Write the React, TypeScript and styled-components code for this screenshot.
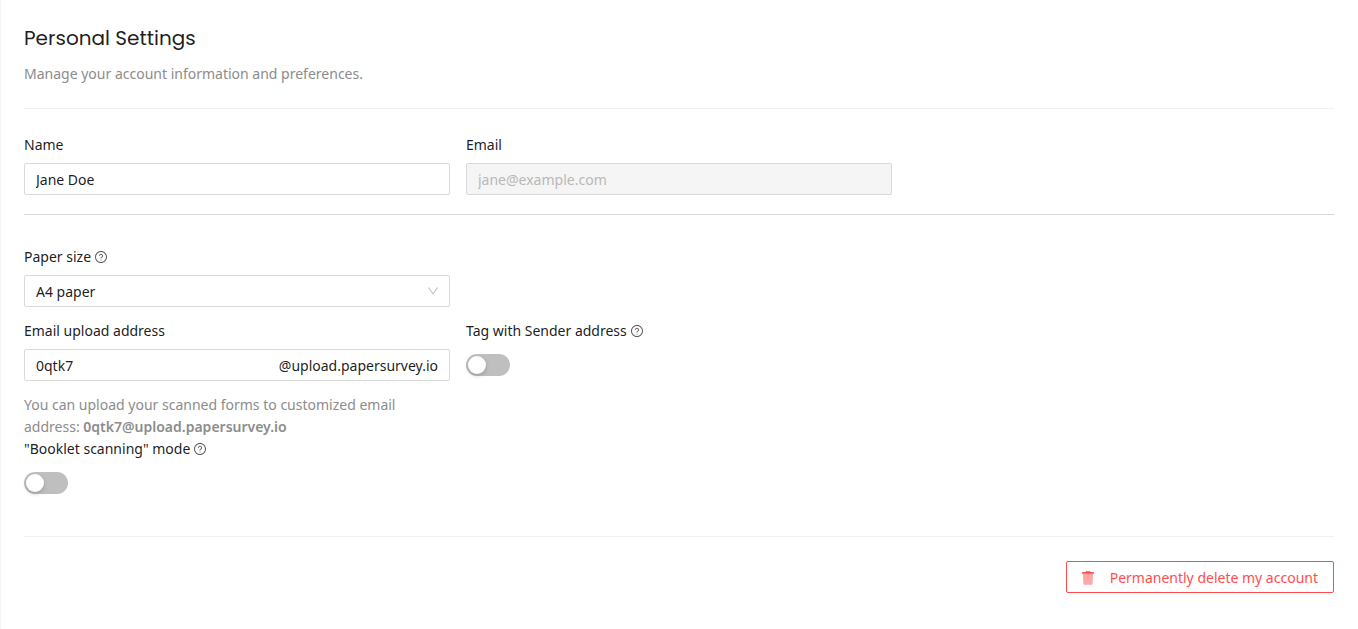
import React, { useState } from "react";
import styled, { createGlobalStyle, css } from "styled-components";

const GlobalStyle = createGlobalStyle`
  *, *::before, *::after { box-sizing: border-box; }
  body {
    margin: 0;
    background: #fff;
    color: rgba(0, 0, 0, 0.9);
    font-family: "Noto Sans", sans-serif;
    font-size: 14px;
    line-height: 22px;
  }
`;

const Page = styled.main`
  min-height: 100vh;
  padding: 24px 24px 24px 23px;
  border-left: 1px solid #f5f5f5;
`;

const Header = styled.header`
  padding-bottom: 23px;
  border-bottom: 1px solid #f0f0f0;
`;

const Title = styled.h1`
  margin: 0 0 11px;
  font-family: Poppins, Inter, sans-serif;
  font-size: 20px;
  font-weight: 400;
  line-height: 28px;
`;

const Muted = styled.p`
  margin: 0;
  color: #8c8c8c;
`;

const Section = styled.section<{ $bottom: number }>`
  display: grid;
  gap: 13px;
  padding-bottom: ${(p) => p.$bottom}px;
`;

const ProfileSection = styled(Section)`
  padding-top: 25px;
  border-bottom: 1px solid #d9d9d9;
`;

const UploadSection = styled(Section)`
  padding-top: 31px;
  border-bottom: 1px solid #f0f0f0;
`;

const Row = styled.div`
  display: grid;
  grid-template-columns: repeat(3, minmax(0, 1fr));
  column-gap: 16px;
`;

const Stack = styled.div``;

const LabelLine = styled.div`
  display: flex;
  align-items: center;
  gap: 4px;
  margin-bottom: 7px;
`;

const controlBox = css`
  width: 100%;
  height: 32px;
  border: 1px solid #d9d9d9;
  border-radius: 2px;
  background: #fff;
  color: inherit;
  font: inherit;
`;

const TextInput = styled.input`
  ${controlBox}
  padding: 0 11px;
  &:disabled {
    background: #f5f5f5;
    color: #b8b8b8;
  }
`;

const SelectWrap = styled.div`
  display: grid;
  align-items: center;
  > * { grid-area: 1 / 1; }
  > svg {
    justify-self: end;
    margin-right: 11px;
    color: #bfbfbf;
    pointer-events: none;
  }
`;

const Select = styled.select`
  ${controlBox}
  appearance: none;
  padding: 2px 32px 0 11px;
`;

const SuffixBox = styled.div`
  ${controlBox}
  display: flex;
  align-items: center;
  padding: 2px 11px 0;
`;

const BareInput = styled.input`
  flex: 1;
  min-width: 0;
  padding: 0;
  border: 0;
  outline: 0;
  background: none;
  color: inherit;
  font: inherit;
`;

const Help = styled(Muted)`
  margin-top: 13px;
  strong { font-weight: 600; }
`;

const SwitchLine = styled.div`
  display: flex;
  align-items: center;
  height: 32px;
`;

const Switch = styled.input`
  appearance: none;
  width: 44px;
  height: 22px;
  margin: 0;
  padding: 2px;
  border-radius: 11px;
  background: #bfbfbf;
  cursor: pointer;
  &::before {
    content: "";
    display: block;
    width: 18px;
    height: 18px;
    border-radius: 50%;
    background: #fff;
    box-shadow: 0 2px 4px rgba(0, 35, 11, 0.2);
  }
  &:checked { background: #1890ff; }
  &:checked::before { margin-left: auto; }
`;

const Footer = styled.footer`
  display: flex;
  justify-content: flex-end;
  padding-top: 24px;
`;

const DangerButton = styled.button`
  display: flex;
  align-items: center;
  gap: 16px;
  height: 32px;
  padding: 1px 15px 0;
  border: 1px solid #ff4d4f;
  border-radius: 2px;
  background: #fff;
  color: #ff4d4f;
  font: inherit;
  cursor: pointer;
`;

const HelpIcon = () => (
  <svg width="12" height="12" viewBox="64 64 896 896" fill="#595959" aria-hidden="true">
    <path d="M512 64C264.600 64 64 264.600 64 512s200.600 448 448 448 448-200.600 448-448S759.400 64 512 64zm0 820c-205.400 0-372-166.600-372-372s166.600-372 372-372 372 166.600 372 372-166.600 372-372 372z" />
    <path d="M623.600 316.700C593.600 290.400 554 276 512 276s-81.600 14.500-111.600 40.700C369.200 344 352 380.700 352 420v7.600c0 4.400 3.600 8 8 8h48c4.400 0 8-3.600 8-8V420c0-44.100 43.100-80 96-80s96 35.900 96 80c0 31.100-22 59.600-56.100 72.700-21.200 8.100-39.200 22.300-52.100 40.900-13.100 19-19.900 41.800-19.900 64.900V620c0 4.400 3.600 8 8 8h48c4.400 0 8-3.600 8-8v-22.700a48.300 48.300 0 0 1 30.900-44.800c59-22.700 97.100-74.700 97.100-132.500.1-39.300-17.100-76-48.300-103.300zM472 732a40 40 0 1 0 80 0 40 40 0 1 0-80 0z" />
  </svg>
);

const ChevronIcon = () => (
  <svg width="12" height="12" viewBox="64 64 896 896" fill="currentColor" aria-hidden="true">
    <path d="M884 256h-75c-5.100 0-9.900 2.500-12.900 6.600L512 654.200 227.900 262.600c-3-4.100-7.800-6.600-12.900-6.600h-75c-6.500 0-10.300 7.400-6.500 12.700l352.600 486.100c12.800 17.600 39 17.600 51.700 0l352.600-486.100c3.900-5.300.1-12.700-6.400-12.700z" />
  </svg>
);

const TrashIcon = () => (
  <svg width="12" height="14" viewBox="0 0 448 512" fill="currentColor" aria-hidden="true">
    <path opacity="0.5" d="M53.200 467a48 48 0 0 0 47.900 45h245.800a48 48 0 0 0 47.900-45L416 96H32z" />
    <path d="M432 32H312l-9.400-18.700A24 24 0 0 0 281.100 0H166.800a23.700 23.700 0 0 0-21.400 13.300L136 32H16A16 16 0 0 0 0 48v32a16 16 0 0 0 16 16h416a16 16 0 0 0 16-16V48a16 16 0 0 0-16-16z" />
  </svg>
);

type FieldProps = { id: string; label: string; hint?: boolean; children: React.ReactNode };

const Field = ({ id, label, hint, children }: FieldProps) => (
  <Stack>
    <LabelLine>
      <label htmlFor={id}>{label}</label>
      {hint && <HelpIcon />}
    </LabelLine>
    {children}
  </Stack>
);

export default function App() {
  const [name, setName] = useState("Jane Doe");
  const [address, setAddress] = useState("0qtk7");

  return (
    <>
      <GlobalStyle />
      <Page>
        <Header>
          <Title>Personal Settings</Title>
          <Muted>Manage your account information and preferences.</Muted>
        </Header>
        <ProfileSection $bottom={19}>
          <Row>
            <Field id="name" label="Name">
              <TextInput id="name" value={name} onChange={(e) => setName(e.target.value)} />
            </Field>
            <Field id="email" label="Email">
              <TextInput id="email" type="email" value="jane@example.com" disabled />
            </Field>
          </Row>
        </ProfileSection>
        <UploadSection $bottom={37}>
          <Row>
            <Field id="paper" label="Paper size" hint>
              <SelectWrap>
                <Select id="paper" defaultValue="a4">
                  <option value="a4">A4 paper</option>
                </Select>
                <ChevronIcon />
              </SelectWrap>
            </Field>
          </Row>
          <Stack>
            <Row>
              <Field id="address" label="Email upload address">
                <SuffixBox>
                  <BareInput id="address" value={address} onChange={(e) => setAddress(e.target.value)} />
                  <span>@upload.papersurvey.io</span>
                </SuffixBox>
                <Help>
                  You can upload your scanned forms to customized email address:{" "}
                  <strong>{`${address}@upload.papersurvey.io`}</strong>
                </Help>
              </Field>
              <Field id="tag" label="Tag with Sender address" hint>
                <SwitchLine>
                  <Switch id="tag" type="checkbox" role="switch" />
                </SwitchLine>
              </Field>
            </Row>
            <Row>
              <Field id="booklet" label={'"Booklet scanning" mode'} hint>
                <SwitchLine>
                  <Switch id="booklet" type="checkbox" role="switch" />
                </SwitchLine>
              </Field>
            </Row>
          </Stack>
        </UploadSection>
        <Footer>
          <DangerButton type="button">
            <TrashIcon />
            Permanently delete my account
          </DangerButton>
        </Footer>
      </Page>
    </>
  );
}
